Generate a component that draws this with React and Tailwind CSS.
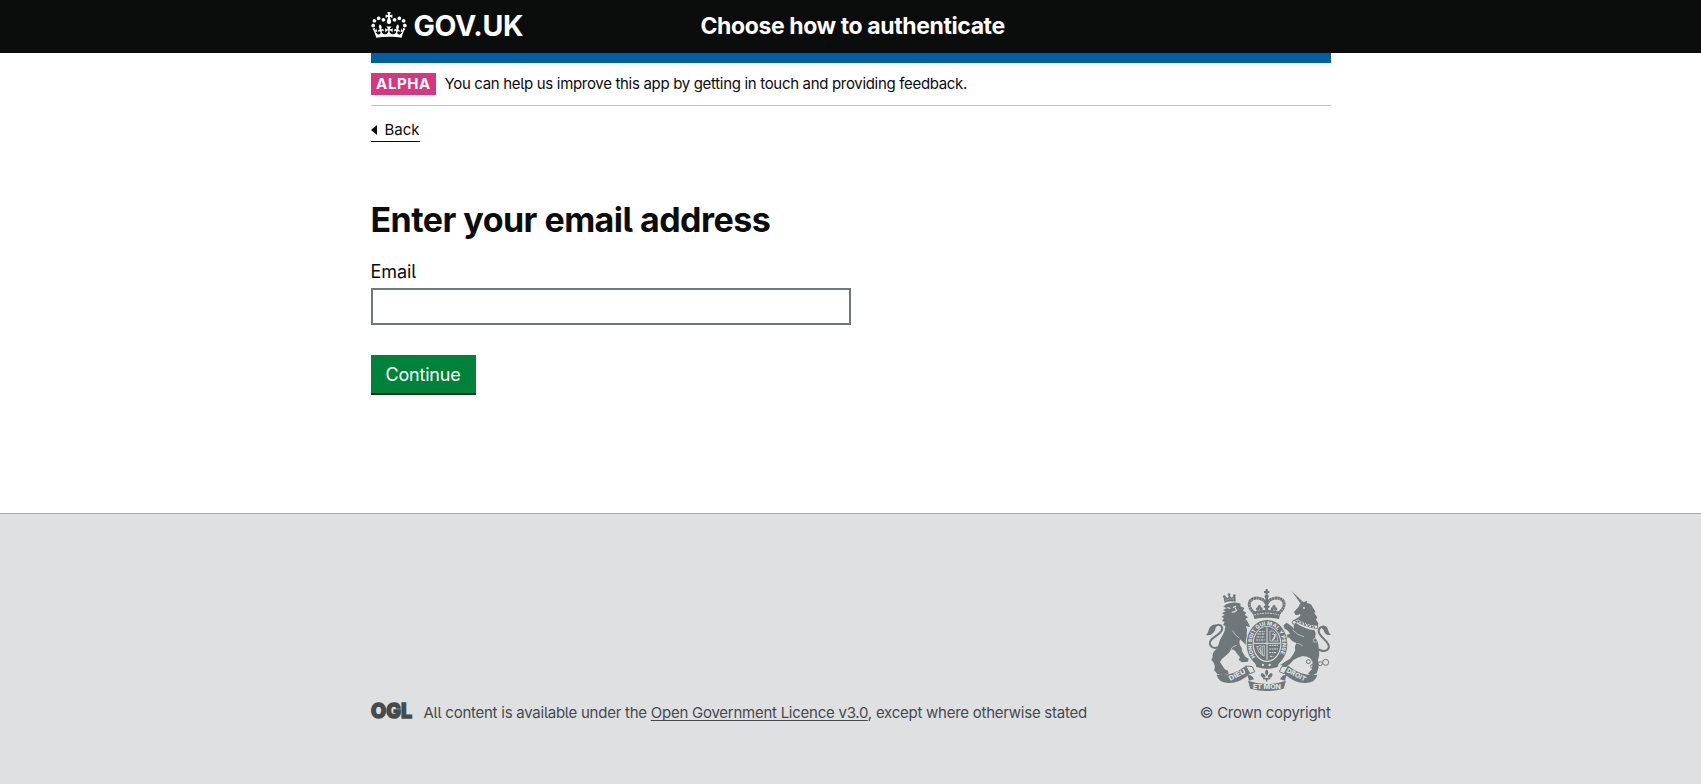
const CROWN =
  'M25 30.2c3.5 1.5 7.7-.2 9.1-3.7 1.5-3.6-.2-7.8-3.9-9.2-3.6-1.4-7.6.3-9.1 3.9-1.4 3.5.3 7.5 3.9 9zM9 39.5c3.6 1.5 7.8-.2 9.2-3.7 1.5-3.6-.2-7.8-3.9-9.1-3.6-1.5-7.6.2-9.1 3.8-1.4 3.5.3 7.5 3.8 9zM4.4 57.2c3.5 1.5 7.7-.2 9.1-3.8 1.5-3.6-.2-7.7-3.9-9.1-3.5-1.5-7.6.3-9.1 3.8-1.4 3.5.3 7.6 3.9 9.1zm38.3-21.4c3.5 1.5 7.7-.2 9.1-3.8 1.5-3.6-.2-7.7-3.9-9.1-3.6-1.5-7.6.3-9.1 3.8-1.3 3.6.4 7.7 3.9 9.1zm64.4-5.6c-3.6 1.5-7.8-.2-9.1-3.7-1.5-3.6.2-7.8 3.8-9.2 3.6-1.4 7.7.3 9.2 3.9 1.3 3.5-.4 7.5-3.9 9zm15.9 9.3c-3.6 1.5-7.7-.2-9.1-3.7-1.5-3.6.2-7.8 3.7-9.1 3.6-1.5 7.7.2 9.2 3.8 1.5 3.5-.3 7.5-3.8 9zm4.7 17.7c-3.6 1.5-7.8-.2-9.2-3.8-1.5-3.6.2-7.7 3.9-9.1 3.6-1.5 7.7.3 9.2 3.8 1.3 3.5-.4 7.6-3.9 9.1zM89.3 35.8c-3.6 1.5-7.8-.2-9.2-3.8-1.4-3.6.2-7.7 3.9-9.1 3.6-1.5 7.7.3 9.2 3.8 1.4 3.6-.3 7.7-3.9 9.1zM69.7 17.7l8.9 4.7V9.3l-8.9 2.8c-.2-.3-.5-.6-.9-.9L72.4 0H59.6l3.5 11.2c-.3.3-.6.5-.9.9l-8.8-2.8v13.1l8.8-4.7c.3.3.6.7.9.9l-5 15.4v.1c-.2.8-.4 1.6-.4 2.4 0 4.1 3.1 7.5 7 8.1h.2c.3 0 .7.1 1 .1.4 0 .7 0 1-.1h.2c4-.6 7.1-4.1 7.1-8.1 0-.8-.1-1.7-.4-2.4V34l-5.1-15.4c.4-.2.7-.6 1-.9zM66 92.8c16.9 0 32.8 1.1 47.1 3.2 4-16.9 8.9-26.7 14-33.5l-9.6-3.4c1 4.9 1.1 7.2 0 10.2-1.5-1.4-3-4.3-4.2-8.7L108.6 76c2.8-2 5-3.2 7.5-3.3-4.4 9.4-10 11.9-13.6 11.2-4.3-.8-6.3-4.6-5.6-7.9 1-4.7 5.7-5.9 8-.5 4.3-8.7-3-11.4-7.6-8.8 7.1-7.2 7.9-13.5 2.1-21.1-8 6.1-8.1 12.3-4.5 20.8-4.7-5.4-12.1-2.5-9.5 6.2 3.4-5.2 7.9-2 7.2 3.1-.6 4.3-6.4 7.8-13.5 7.2-10.3-.9-10.9-8-11.2-13.8 2.5-.5 7.1 1.8 11 7.3L80.2 60c-4.1 4.4-8 5.3-12.3 5.4 1.4-4.4 8-11.6 8-11.6H55.5s6.4 7.2 7.9 11.6c-4.2-.1-8-1-12.3-5.4l1.4 16.4c3.9-5.5 8.5-7.7 10.9-7.3-.3 5.8-.9 12.8-11.1 13.8-7.2.6-12.9-2.9-13.5-7.2-.7-5 3.8-8.3 7.1-3.1 2.7-8.7-4.6-11.6-9.4-6.2 3.7-8.5 3.6-14.7-4.6-20.8-5.8 7.6-5 13.9 2.2 21.1-4.7-2.6-11.9.1-7.7 8.8 2.3-5.5 7.1-4.2 8.1.5.7 3.3-1.3 7.1-5.7 7.9-3.5.7-9-1.8-13.5-11.2 2.5.1 4.7 1.3 7.5 3.3l-4.7-15.4c-1.2 4.4-2.7 7.2-4.3 8.7-1.1-3-.9-5.3 0-10.2l-9.5 3.4c5 6.9 9.9 16.7 14 33.5 14.8-2.1 30.8-3.2 47.7-3.2z';

function CrestCrown() {
  return (
    <g>
      <circle cx="230" cy="36" r="5" />
      <path d="M227 27h6v16h-6zM222 33h16v6h-16z" />
      <circle cx="230" cy="49" r="6" />
      <path d="M226 52h8v40h-8z" />
      <g fill="none" stroke="currentColor" strokeWidth="9" strokeDasharray="7 1">
        <path d="M194 100C164 74 180 50 206 55C220 57 227 64 228 72" />
        <path d="M266 100C296 74 280 50 254 55C240 57 233 64 232 72" />
      </g>
      <path d="M188 96q42-13 84 0l-5 21q-37-8-74 0z" />
      <g>
        <circle cx="208" cy="80" r="5" />
        <circle cx="203" cy="87" r="5" />
        <circle cx="213" cy="87" r="5" />
        <circle cx="252" cy="80" r="5" />
        <circle cx="247" cy="87" r="5" />
        <circle cx="257" cy="87" r="5" />
        <path d="M220 80l10-8 10 8-10 9z" />
      </g>
      <path d="M193 105q37-11 74 0" fill="none" stroke="#dee0e2" strokeWidth="3" strokeDasharray="5 3" />
    </g>
  );
}

function Lion() {
  return (
    <g>
      <path d="M104 68l-3-12 5-6 7 4 5-8 7 7 7-6 5 6v12q-17-4-33 3z" />
      <g>
        <circle cx="117" cy="44" r="4" />
        <circle cx="103" cy="50" r="4" />
        <circle cx="133" cy="47" r="4" />
      </g>
      <path d="M106 61q12-5 26-4" fill="none" stroke="#dee0e2" strokeWidth="2" strokeDasharray="4 3" />
      <path d="M108 73L100 80 110 84 99 90 107 94 96 100 104 104 94 111 102 114 96 123 104 126 99 135 106 138Q106 154 97 167Q88 180 87 190Q84 203 76 210Q66 218 68 232L64 240Q72 246 75 262L72 270 82 282Q98 288 116 281L114 272 104 268 98 258 90 246Q94 236 106 228Q118 220 124 208Q134 208 140 220L150 232 146 240 156 247 174 245 176 236 166 230 156 214Q158 204 150 196Q146 186 150 178Q160 186 168 196L172 204 182 200 184 188 176 180Q184 176 180 166L170 164Q174 150 168 138L180 142Q174 122 166 118L174 112 164 104 169 98 159 92 163 84 151 79 152 71Q130 63 108 73Z" />
      <path d="M90 200C62 212 48 188 72 172C92 160 102 148 94 138C86 130 76 136 70 146" fill="none" stroke="currentColor" strokeWidth="6" />
      <path d="M80 133Q60 134 56 150Q54 160 48 165Q62 168 70 158Q78 150 77 140Z" />
      <path d="M148 174q-14-8-20-22M140 196q-12 2-18 12" fill="none" stroke="#dee0e2" strokeWidth="2" />
      <path d="M112 83l9 2M129 82l9-3M125 96q7 1 12-3M136 84l4 10" fill="none" stroke="#dee0e2" strokeWidth="3.5" />
    </g>
  );
}

function Unicorn() {
  return (
    <g>
      <path d="M305 33l38 36-8 7z" />
      <path d="M318 52l6-5M325 60l6-5M331 67l6-5" fill="none" stroke="#dee0e2" strokeWidth="1" />
      <path d="M336 68L352 62 350 69Q364 70 368 82L376 94 373 100 382 112 378 119 385 130 383 147Q346 143 311 121L328 110Q334 105 330 102Q322 106 316 104L312 96 326 80Q328 70 336 68Z" />
      <path d="M319 118q24 19 62 23" fill="none" stroke="#dee0e2" strokeWidth="7" />
      <path d="M317 122l5-7 4 12 6-8 3 13 7-9 3 14 7-10 3 13 7-9 3 12 6-7 3 8" fill="none" stroke="currentColor" strokeWidth="3" />
      <circle cx="342" cy="84" r="3" fill="#dee0e2" />
      <path d="M316 128Q345 147 374 151Q379 160 375 172Q386 184 386 205Q390 225 384 240L386 262 380 280 364 288 354 280 366 268 368 246 360 234Q348 228 338 228Q322 232 310 240L300 252 284 262 272 254 284 246 300 236Q312 222 316 210Q312 200 320 190Q304 184 296 172L284 178 282 190 296 198 290 204 274 194 270 178 282 166 300 162 294 152 284 146 280 136 290 128 304 138 312 146Q309 136 316 128Z" />
      <path d="M377 202C398 222 420 212 416 196C410 178 384 168 386 152C388 138 402 138 408 148" fill="none" stroke="currentColor" strokeWidth="6" />
      <path d="M396 137q14-2 18 12 2 10 9 16-16 2-20-10-3-8-7-10z" />
      <g fill="none" stroke="currentColor" strokeWidth="3">
        <circle cx="313" cy="127" r="6" />
        <circle cx="355" cy="245" r="6" />
        <circle cx="368" cy="259" r="6" />
        <circle cx="391" cy="251" r="6" />
        <circle cx="407" cy="247" r="9" />
      </g>
      <circle cx="376" cy="181" r="6" fill="none" stroke="#dee0e2" strokeWidth="2" />
      <path d="M308 150q14 16 34 20M322 190q10 2 16 8" fill="none" stroke="#dee0e2" strokeWidth="2" />
    </g>
  );
}

function Shield() {
  return (
    <g>
      <ellipse cx="231" cy="192" rx="64" ry="74" fill="#dee0e2" />
      <ellipse cx="231" cy="192" rx="52" ry="63" fill="none" stroke="currentColor" strokeWidth="18" />
      <defs>
        <path id="garter" d="M197 231A46 57 0 1 1 265 231" />
      </defs>
      <text fill="#dee0e2" fontSize="16" fontWeight="800" className="font-['Inter',sans-serif]">
        <textPath href="#garter" textLength="232" lengthAdjust="spacingAndGlyphs">HONI SOIT QUI MAL Y PENSE</textPath>
      </text>
      <ellipse cx="231" cy="191" rx="40" ry="51" />
      <path d="M231 143v96M191 190h80" stroke="#dee0e2" strokeWidth="3" />
      <path d="M202 162h22M200 171h24M198 180h26M207 155h17" stroke="#dee0e2" strokeWidth="3" strokeDasharray="7 2 3 2" />
      <path d="M238 196h28M238 207h26M238 218h22M240 229h10" stroke="#dee0e2" strokeWidth="3" strokeDasharray="6 2 4 2" />
      <path d="M240 153h10q14 12 14 30h-24z" fill="none" stroke="#dee0e2" strokeWidth="2" />
      <path d="M246 163q9-4 9 6t-9 12M257 163l-9 16" fill="none" stroke="#dee0e2" strokeWidth="3" />
      <path d="M200 199q8 2 10-3 7 6 13 1v31q-16-3-23-29zM206 203l13 21M212 200v22M217 200v26" fill="none" stroke="#dee0e2" strokeWidth="2" />
      <path d="M193 240q38 17 76 0l-6 21q-32 11-64 0z" />
      <circle cx="219" cy="255" r="3.5" fill="#dee0e2" />
      <circle cx="239" cy="255" r="3.5" fill="#dee0e2" />
    </g>
  );
}

function Ribbon() {
  return (
    <g>
      <path d="M80 284q46 6 87-26l13 23q-34 30-66 28-30-3-34-25zM382 284q-46 6-87-26l-13 23q34 30 66 28 30-3 34-25z" />
      <path d="M167 258l20 2 7 15-14 6zM295 258l-20 2-7 15 14 6z" fill="none" stroke="currentColor" strokeWidth="3" />
      <path d="M174 302q56 20 114 0l-7 24q-50 14-100 0z" />
      <path d="M172 285q15-1 20 13l-15 4zM290 285q-15-1-20 13l15 4z" />
      <path d="M230 268q-10 9 0 20 10-11 0-20zM227 289q-12-17-15-5 2 11 13 9zM233 289q12-17 15-5-2 11-13 9zM219 294h22v4h-22zM226 297h8l-4 10z" />
      <g fill="#dee0e2" fontWeight="800" textAnchor="middle" className="font-['Inter',sans-serif]">
        <text x="141" y="292" fontSize="21" transform="rotate(-27 141 284)" textLength="54" lengthAdjust="spacingAndGlyphs">DIEU</text>
        <text x="319" y="291" fontSize="20" transform="rotate(28 319 284)" textLength="62" lengthAdjust="spacingAndGlyphs">DROIT</text>
        <text x="231" y="327" fontSize="19" textLength="84" lengthAdjust="spacingAndGlyphs">ET MON</text>
      </g>
    </g>
  );
}

function RoyalArms() {
  return (
    <svg viewBox="48 27 375 306" width="125" height="102" fill="currentColor" className="text-[#6f777b]" aria-hidden="true">
      <Lion />
      <Unicorn />
      <Shield />
      <CrestCrown />
      <Ribbon />
    </svg>
  );
}

function OglLogo() {
  return (
    <svg width="41" height="18" viewBox="0 0 41 18" fill="currentColor" className="block shrink-0 overflow-visible" role="img" aria-label="OGL">
      <g className="font-['Inter',sans-serif]" fontWeight="800" stroke="currentColor" strokeWidth="1.5">
        <text x="0" y="16" fontSize="20.5" textLength="41" lengthAdjust="spacingAndGlyphs">OGL</text>
      </g>
    </svg>
  );
}

function Header() {
  return (
    <header className="h-[53px] bg-[#0b0c0c] text-white">
      <div className="mx-auto flex h-full w-[960px] items-center">
        <a href="#" className="flex w-[330px] items-center pb-[3px]">
          <svg viewBox="0 0 132 97" className="mr-[7px] h-[26px] w-[36px]" fill="currentColor" aria-hidden="true">
            <path d={CROWN} />
          </svg>
          <span className="pt-[2px] text-[28.5px] leading-[30px] font-bold tracking-[-0.3px]">GOV.UK</span>
        </a>
        <span className="pb-px text-[23px] leading-7 font-bold tracking-[-0.4px]">Choose how to authenticate</span>
      </div>
    </header>
  );
}

export default function App() {
  return (
    <div className="flex min-h-[784px] flex-col bg-white font-['Inter','Liberation_Sans',sans-serif] text-[15px] text-[#0b0c0c] [font-feature-settings:'cv05']">
      <Header />
      <div className="mx-auto w-[960px]">
        <div className="h-[10px] bg-[#005ea5]" />
        <div className="flex h-[43px] items-center border-b border-[#bfc1c3]">
          <strong className="flex h-[22px] w-[65px] items-center justify-center bg-[#d53880] pb-px pl-px text-[15px] leading-5 font-bold tracking-[0.6px] text-white">
            ALPHA
          </strong>
          <span className="ml-[9px] leading-5 tracking-[-0.32px]">
            You can help us improve this app by getting in touch and providing feedback.
          </span>
        </div>
        <div className="flex pt-[14px]">
          <a href="#" className="flex h-[22px] items-center border-b border-[#0b0c0c] pb-px leading-5">
            <svg width="6" height="10" viewBox="0 0 6 10" className="mr-[8px]" fill="currentColor" aria-hidden="true">
              <path d="M0 5l6-5v10z" />
            </svg>
            Back
          </a>
        </div>
        <main className="pt-[58px]">
          <h1 className="text-[34px] leading-10 font-bold tracking-[-0.54px]">Enter your email address</h1>
          <label htmlFor="email" className="mt-5 block text-[18px] leading-6 tracking-[-0.1px]">
            Email
          </label>
          <input id="email" type="email" className="mt-[4px] block h-[37px] w-[480px] border-2 border-[#6f777b] bg-white px-1 outline-none" />
          <button className="mt-[30px] flex h-[40px] w-[105px] items-center justify-center border-b-2 border-[#003618] bg-[#00823b] pt-[2px] text-[18px] leading-5 tracking-[-0.2px] text-white">
            Continue
          </button>
        </main>
      </div>
      <footer className="mt-[118px] flex-1 border-t border-[#a1acb2] bg-[#dee0e2] text-[#454a4d]">
        <div className="mx-auto flex w-[960px] items-end justify-between pt-[75px]">
          <div className="flex items-center">
            <OglLogo />
            <p className="ml-[12px] pt-[5px] leading-5 tracking-[-0.25px]">
              All content is available under the{' '}
              <a href="#" className="underline decoration-1 underline-offset-[2px] [text-decoration-skip-ink:none]">Open Government Licence v3.0</a>, except where otherwise
              stated
            </p>
          </div>
          <div className="flex flex-col items-end">
            <RoyalArms />
            <p className="mt-[12px] leading-5 tracking-[-0.3px]">© Crown copyright</p>
          </div>
        </div>
      </footer>
    </div>
  );
}
